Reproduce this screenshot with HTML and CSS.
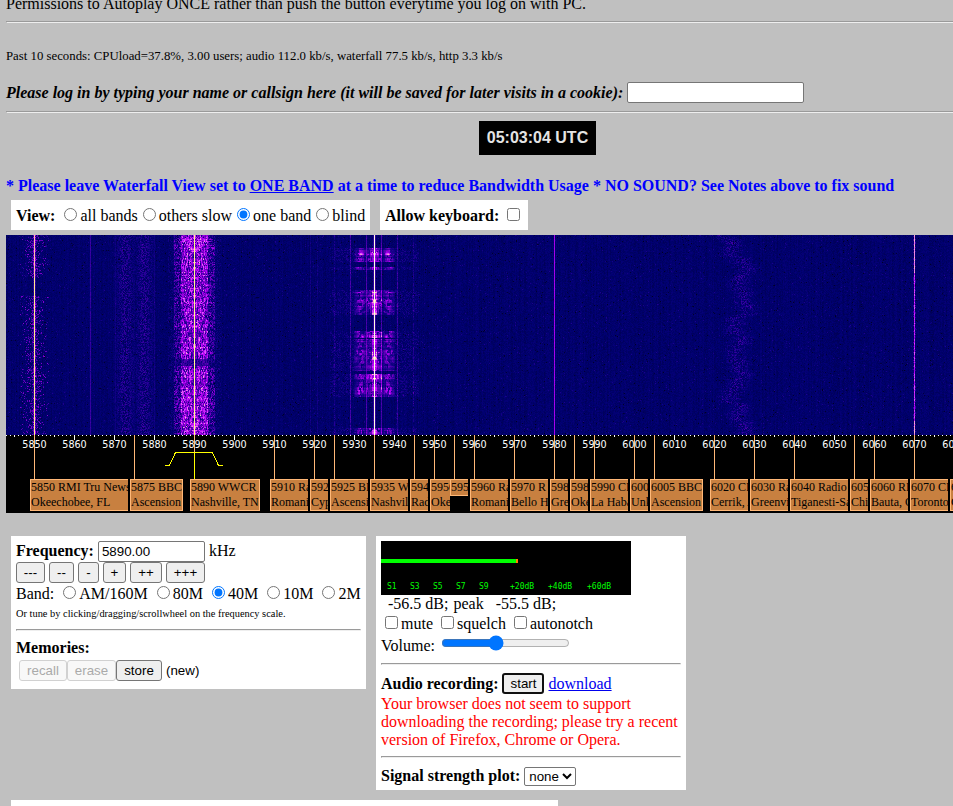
FILE: index.html
```html
<!DOCTYPE html>
<html lang="en">
<head>
<meta charset="utf-8">
<title>WebSDR</title>
<link rel="stylesheet" href="styles.css">
</head>
<body>
<div class="page">
  <p class="intro">Permissions to Autoplay ONCE rather than push the button everytime you log on with PC.</p>
  <hr>
  <p class="stats">Past 10 seconds: CPUload=37.8%, 3.00 users; audio 112.0 kb/s, waterfall 77.5 kb/s, http 3.3 kb/s</p>
  <div class="login"><label for="name">Please log in by typing your name or callsign here (it will be saved for later visits in a cookie):</label><input id="name" type="text"></div>
  <hr>
  <div class="clock">05:03:04 UTC</div>
  <p class="notice">* Please leave Waterfall View set to <u>ONE BAND</u> at a time to reduce Bandwidth Usage * NO SOUND? See Notes above to fix sound</p>
  <div class="options">
    <div class="option view"><b>View:</b> <input type="radio" name="view">all bands<input type="radio" name="view">others slow<input type="radio" name="view" checked>one band<input type="radio" name="view">blind</div>
    <div class="option keys"><b>Allow keyboard:</b> <input type="checkbox"></div>
  </div>
  <div class="band">
    <canvas id="waterfall" width="947" height="200"></canvas>
    <div class="scale" id="scale">
      <svg class="ticks" id="ticks" width="947" height="78" shape-rendering="crispEdges"></svg>
    </div>
  </div>
  <div class="panels">
    <section class="panel tuning">
      <div class="freq"><b>Frequency:</b><input type="text" value="5890.00"><span>kHz</span></div>
      <div class="steps"><button class="s3">---</button><button class="s2">--</button><button class="s1">-</button><button class="p1">+</button><button class="p2">++</button><button class="p3">+++</button></div>
      <div class="bands">Band: <input type="radio" name="band">AM/160M <input type="radio" name="band">80M <input type="radio" name="band" checked>40M <input type="radio" name="band">10M <input type="radio" name="band">2M</div>
      <div class="hint">Or tune by clicking/dragging/scrollwheel on the frequency scale.</div>
      <hr>
      <div class="heading"><b>Memories:</b></div>
      <div class="memory"><button class="recall" disabled>recall</button><button class="erase" disabled>erase</button><button class="store">store</button><span>(new)</span></div>
    </section>
    <section class="panel audio">
      <svg class="meter" width="250" height="54" viewBox="0 0 250 54">
        <rect width="250" height="54" fill="#000"/>
        <rect y="18" width="135" height="4" fill="#0f0"/>
        <rect x="135" y="18" width="2" height="4" fill="#ff8000"/>
        <g fill="#0f0">
          <text x="6" y="48">S1</text><text x="29" y="48">S3</text><text x="52" y="48">S5</text><text x="75" y="48">S7</text><text x="98" y="48">S9</text>
          <text x="129" y="48">+20dB</text><text x="167" y="48">+40dB</text><text x="206" y="48">+60dB</text>
        </g>
      </svg>
      <div class="level"><span class="now">-56.5 dB;</span><span class="peak">peak</span><span>-55.5 dB;</span></div>
      <div class="checks"><input type="checkbox">mute <input type="checkbox">squelch <input type="checkbox">autonotch</div>
      <div class="volume"><span>Volume:</span><input type="range" min="0" max="100" value="42"></div>
      <hr>
      <div class="record"><b>Audio recording:</b><button>start</button><a href="#">download</a></div>
      <p class="warning">Your browser does not seem to support downloading the recording; please try a recent version of Firefox, Chrome or Opera.</p>
      <hr>
      <div class="plot"><b>Signal strength plot:</b><select><option>none</option></select></div>
    </section>
  </div>
  <div class="chat"></div>
</div>
<script src="waterfall.js"></script>
</body>
</html>
```
FILE: styles.css
```css
* { box-sizing: border-box; }
html { overflow: hidden; }
body {
  margin: 0;
  height: 806px;
  overflow: hidden;
  background: #c0c0c0;
  color: #000;
  font: 16px/18px "Liberation Serif", serif;
}
p { margin: 0; }
.page { width: 947px; margin: -5px 0 0 6px; }
hr { height: 2px; margin: 8px 0; border: 1px inset #eee; }
.page > hr { border-right: 0; }
input, button, select { font: 13.333px "Liberation Sans", sans-serif; }
input[type="text"] {
  height: 21px;
  margin: 0;
  padding: 1px 2px;
  border: 1px solid #767676;
  border-radius: 2px;
  background: #fff;
}
button {
  height: 21px;
  margin: 0;
  padding: 0;
  border: 1px solid #767676;
  border-radius: 3px;
  background: #efefef;
  color: #000;
  text-align: center;
}
button:disabled { border-color: #d1d1d1; color: #aaa; background: #f8f8f8; }
input[type="radio"] { margin: 3px 3px 0 5px; }
input[type="checkbox"] { margin: 3px 3px 3px 4px; }

.intro { height: 18px; }
.stats { margin-top: 25px; font-size: 12.8px; line-height: 16px; }
.login { display: flex; align-items: center; height: 21px; margin-top: 18px; font-weight: bold; font-style: italic; }
.login input { width: 177px; margin-left: 4px; }
.clock {
  width: 117px;
  height: 34px;
  margin: 8px 0 0 473px;
  background: #000;
  color: #e4e4e4;
  font: bold 16px/33px "Liberation Sans", sans-serif;
  text-align: center;
}
.notice { margin-top: 22px; color: #00f; font-weight: bold; white-space: nowrap; }
.options { display: flex; gap: 10px; margin: 5px 0 5px 5px; }
.option { height: 30px; padding: 5px; background: #fff; white-space: nowrap; }
.view { width: 359px; }
.keys { width: 148px; }

.band { width: 947px; height: 278px; background: #000; }
.band canvas { display: block; }
.scale { position: relative; height: 78px; overflow: hidden; }
.ticks { display: block; }
.ticks text { font: 9.6px "DejaVu Sans", sans-serif; fill: #fff; text-anchor: middle; }
.station {
  position: absolute;
  top: 44px;
  height: 32px;
  overflow: hidden;
  border: 1px solid #ffb878;
  background: #c88040;
  font-size: 12px;
  line-height: 15px;
  white-space: pre;
}
.station.cut { border-right: 0; }
.station.short { height: 17px; }

.panels { display: flex; align-items: flex-start; gap: 10px; margin: 23px 0 0 5px; }
.panel { padding: 5px; background: #fff; }
.tuning { width: 355px; height: 153px; }
.freq { display: flex; gap: 4px; align-items: center; height: 21px; }
.freq b, .freq span { margin-top: -2px; }
.freq input { width: 107px; padding-left: 3px; }
.steps { display: flex; gap: 4px; height: 21px; }
.s3 { width: 29px; }
.s2 { width: 25px; }
.s1 { width: 21px; }
.p1 { width: 23px; }
.p2 { width: 32px; }
.p3 { width: 39px; }
.bands { height: 20px; line-height: 20px; white-space: nowrap; }
.hint { height: 18px; font-size: 10.4px; line-height: 21px; }
.tuning hr { margin: 8px 0; }
.memory { display: flex; padding: 3px 0 0 3px; font: 13.333px/21px "Liberation Sans", sans-serif; }
.recall { width: 48px; }
.erase { width: 49px; }
.store { width: 46px; }
.memory span { margin-left: 4px; }

.audio { width: 310px; height: 254px; }
.meter { display: block; }
.meter text { font: 8px "DejaVu Sans Mono", monospace; }
.level { display: flex; height: 18px; padding-left: 7px; }
.peak { margin: 0 12px 0 5px; }
.checks { height: 22px; line-height: 20px; }
.volume { display: flex; height: 20px; }
.volume span { width: 60px; line-height: 22px; }
.volume input { width: 129px; height: 16px; margin: 0; }
.audio hr { margin: 8px 0; }
.record { display: flex; align-items: center; height: 21px; }
.record button { width: 42px; margin: 0 4px; border: 2px solid #101010; }
a { color: #00e; }
.warning { padding-top: 1px; margin-bottom: -1px; color: #f00; }
.plot { display: flex; align-items: center; height: 20px; margin-top: 8px; }
.plot select { width: 52px; height: 19px; margin-left: 4px; padding: 0; border: 1px solid #767676; border-radius: 2px; background: #fff; }
.chat { width: 547px; height: 12px; margin: 10px 0 0 5px; background: #fff; }
```
FILE: waterfall.js
```js
const W = 947, H = 200;
let seed = 12345;
function rnd() {
  seed = (Math.imul(seed, 1664525) + 1013904223) >>> 0;
  return seed / 4294967296;
}
const xOf = f => 28 + (f - 5850) * 4;

// Intensity to colour: black, navy, violet, magenta, pink, yellow
const stops = [[0, 0, 0, 20], [40, 0, 0, 112], [70, 30, 0, 145], [120, 105, 0, 190],
  [170, 185, 0, 250], [205, 225, 90, 250], [235, 250, 190, 190], [255, 255, 255, 160]];
function colour(v) {
  v = Math.max(0, Math.min(254, v));
  let i = 0;
  while (v >= stops[i + 1][0]) i++;
  const a = stops[i], b = stops[i + 1], t = (v - a[0]) / (b[0] - a[0]);
  return [1, 2, 3].map(k => a[k] + (b[k] - a[k]) * t);
}

const ctx = document.getElementById('waterfall').getContext('2d');
const image = ctx.createImageData(W, H);
const columns = Array.from({ length: W }, () => rnd() * 7);
const bursts = [[13, 27], [32, 35], [55, 80], [96, 103], [104, 136], [139, 162], [193, 200]];
const drift = [[0, 715], [4, 725], [12, 729], [19, 724], [24, 736], [35, 743], [48, 733], [62, 740], [78, 743], [84, 730],
  [95, 730], [105, 739], [115, 730], [128, 733], [140, 737], [150, 731], [166, 724], [170, 738], [180, 733], [195, 742], [200, 738]];
function driftAt(y) {
  let i = 0;
  while (i < drift.length - 2 && y > drift[i + 1][0]) i++;
  const a = drift[i], b = drift[i + 1];
  return a[1] + (b[1] - a[1]) * (y - a[0]) / (b[0] - a[0]) - 2;
}
// Sidebands are mirrored about the carrier and persist for a few rows
const sideA = new Array(30).fill(.5), sideB = new Array(30).fill(.5);
let loud = .5;
for (let y = 0; y < H; y++) {
  const rowA = rnd();
  const burst = bursts.some(b => y >= b[0] && y < b[1]);
  loud = loud * .5 + rnd() * .5;
  for (let i = 0; i < 30; i++) {
    if (rnd() < .6) sideA[i] = rnd();
    if (rnd() < .5) sideB[i] = i > 0 && rnd() < .55 ? sideB[i - 1] : rnd();
  }
  const center = driftAt(y) + (rnd() - .5) * 6;
  for (let x = 0; x < W; x++) {
    let v = 28 + columns[x] + rnd() * 13;
    if (rnd() < .012) v += 25;
    if (rnd() < .012) v -= 25;
    const d0 = Math.abs(x - 28);
    if (d0 < 15 && (y < 43 || y > 60) && rnd() < .75 * Math.exp(-d0 / 5)) v += 85 * rnd() + 15;
    if (d0 === 1) v += 20 + rnd() * 30;
    if (x >= 108 && x < 150) {
      const k = Math.max(Math.exp(-((x - 119) ** 2) / 60), Math.exp(-((x - 138) ** 2) / 60));
      if (rnd() < .55) v += 42 * k * rnd() + 12 * k;
      if (x === 109 || x === 148) v += 12;
    }
    if (x === 84) v += 40 + rnd() * 12;
    const d1 = Math.abs(x - 188);
    const fade = y > 123 && y < 131 ? .45 : 1;
    if (d1 < 14) v += (sideA[d1] * 135 + rnd() * 45 + rowA * 25 - 5) * fade;
    else if (d1 < 21 && rnd() < .7) v += (sideA[d1] * 85 + (rowA > .75 ? 30 : 0)) * fade;
    else if (d1 < 27 && rnd() < .3) v += 18;
    const d2 = Math.abs(x - 368);
    if (burst) {
      if (d2 < 21) {
        const ring = Math.exp(-((d2 - 14) ** 2) / 26);
        v += loud * 22 + 210 * sideB[d2] * ring * loud;
        if (d2 < 8) v += 170 * sideB[d2] * (.35 + loud) * (1 - d2 / 14);
      } else if (d2 < 45 && rnd() < .35) v += 20 * rnd() + 8;
      if (d2 < 3) v += 55;
    } else if (d2 === 1) v += 45;
    if (x === 360 || x === 375) v += 50 + rnd() * 20;
    if (x === 344 || x === 391) v += 28 + rnd() * 40;
    if (x === 328 || x === 407) v += rnd() * 42;
    if (x === 304 || x === 431 || x === 311) v += rnd() * 22;
    const d3 = Math.abs(x - center);
    if (d3 < 12 && rnd() < .55) v += 56 * (1 - d3 / 13) * rnd() + 4;
    if (x === 548) v = 150 + rnd() * 14;
    if (x === 908) v = y < 38 || y > 185 ? 205 + rnd() * 30 : 145 + rnd() * 65;
    if (Math.abs(x - 908) === 1 && rnd() < .25) v += 50;
    let c = colour(v);
    if (x === 28) c = y < 43 ? [255, 190, 170] : [255, 235, 140];
    if (x === 188) c = [255, 250, 140];
    if (x === 368) c = [255, 255, 225];
    const p = (y * W + x) * 4;
    image.data[p] = c[0];
    image.data[p + 1] = c[1];
    image.data[p + 2] = c[2];
    image.data[p + 3] = 255;
  }
}
ctx.putImageData(image, 0, 0);

// Frequency, first line, second line, box width, whether the box is cut off
const stations = [
  [5850, '5850 RMI Tru News', 'Okeechobee, FL', 98, 1], [5875, '5875 BBC', 'Ascension', 53, 0],
  [5890, '5890 WWCR', 'Nashville, TN', 70, 0], [5910, '5910 Radio', 'Romania', 38, 1],
  [5920, '5920', 'Cyprus', 18, 1], [5925, '5925 BBC', 'Ascension', 38, 1],
  [5935, '5935 WWCR', 'Nashville, TN', 38, 1], [5945, '5945', 'Radio', 18, 1],
  [5950, '5950', 'Okeechobee', 20, 1], [5955, '5955', '', 18, 1],
  [5960, '5960 Radio', 'Romania', 38, 1], [5970, '5970 R', 'Bello Horizonte', 38, 1],
  [5980, '5980', 'Greenville', 18, 1], [5985, '5985', 'Okeechobee', 18, 1],
  [5990, '5990 CRI', 'La Habana', 38, 1], [6000, '6000', 'Unknown', 18, 1],
  [6005, '6005 BBC', 'Ascension', 53, 0], [6020, '6020 CRI', 'Cerrik, Albania', 38, 1],
  [6030, '6030 Radio', 'Greenville', 38, 1], [6040, '6040 Radio', 'Tiganesti-Saftica', 58, 1],
  [6055, '6055', 'Chiba', 18, 1], [6060, '6060 RHC', 'Bauta, Cuba', 38, 1],
  [6070, '6070 CFRX', 'Toronto', 38, 1], [6080, '6080', 'Greenville', 38, 1]
];
let marks = '';
for (let f = 5843; f < 6080; f++) {
  const h = f % 10 === 0 ? 5 : f % 5 === 0 ? 2 : 1;
  marks += `<rect x="${xOf(f)}" y="0" width="1" height="${h}" fill="#fff"/>`;
}
for (const s of stations) {
  marks += `<rect x="${xOf(s[0])}" y="0" width="1" height="44" fill="#ffb878"/>`;
}
for (let f = 5850; f < 6090; f += 10) marks += `<text x="${xOf(f) + .5}" y="13">${f}</text>`;
marks += '<path d="M159 30.5h4.5l6-13h37l6 13h4.5M188.5 17v27" fill="none" stroke="#ff0"/>';
document.getElementById('ticks').innerHTML = marks;
const scale = document.getElementById('scale');
for (const [f, name, place, width, cut] of stations) {
  const box = document.createElement('div');
  box.className = 'station' + (cut ? ' cut' : '') + (place ? '' : ' short');
  box.style.left = xOf(f) - 4 + 'px';
  box.style.width = width + 'px';
  box.textContent = place ? name + '\n' + place : name;
  scale.append(box);
}
```
